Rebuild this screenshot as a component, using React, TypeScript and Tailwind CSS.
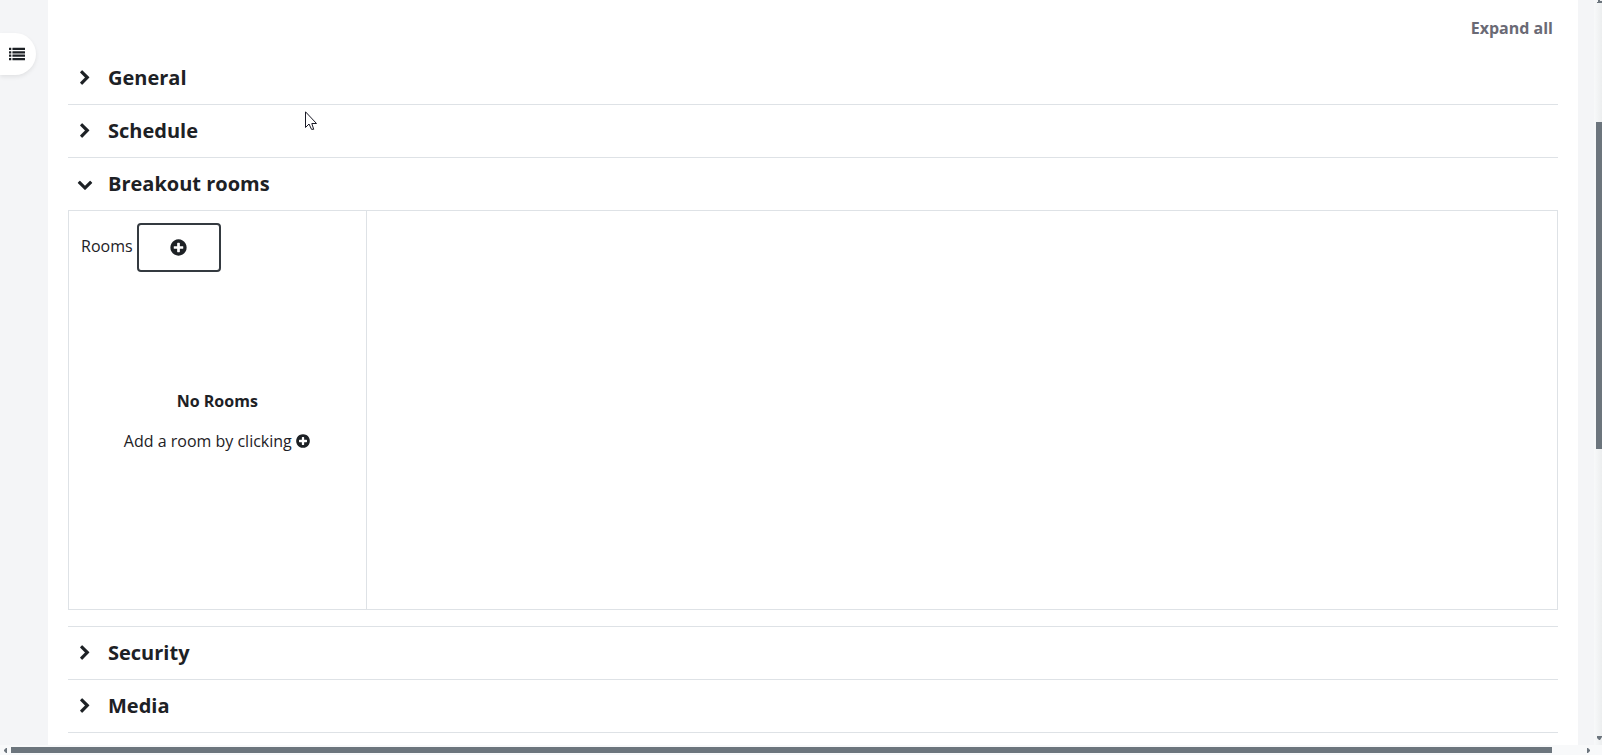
import { useState } from "react"

type IconProps = { className?: string }

function ChevronRight({ className }: IconProps) {
  return (
    <svg viewBox="0 0 1792 1792" fill="currentColor" className={className} aria-hidden="true">
      <path d="M1363 877l-742 742q-19 19-45 19t-45-19l-166-166q-19-19-19-45t19-45l531-531-531-531q-19-19-19-45t19-45l166-166q19-19 45-19t45 19l742 742q19 19 19 45t-19 45z" />
    </svg>
  )
}

function ChevronDown({ className }: IconProps) {
  return (
    <svg viewBox="0 0 1792 1792" fill="currentColor" className={className} aria-hidden="true">
      <path d="M1683 808l-742 741q-19 19-45 19t-45-19l-742-741q-19-19-19-45.5t19-45.5l166-165q19-19 45-19t45 19l531 531 531-531q19-19 45-19t45 19l166 165q19 19 19 45.5t-19 45.5z" />
    </svg>
  )
}

function PlusCircle({ className }: IconProps) {
  return (
    <svg viewBox="0 0 1792 1792" fill="currentColor" className={className} aria-hidden="true">
      <path d="M1344 960v-128q0-26-19-45t-45-19h-256v-256q0-26-19-45t-45-19h-128q-26 0-45 19t-19 45v256h-256q-26 0-45 19t-19 45v128q0 26 19 45t45 19h256v256q0 26 19 45t45 19h128q26 0 45-19t19-45v-256h256q26 0 45-19t19-45zm320-64q0 209-103 385.5t-279.5 279.5-385.5 103-385.5-103-279.5-279.5-103-385.5 103-385.5 279.5-279.5 385.5-103 385.5 103 279.5 279.5 103 385.5z" />
    </svg>
  )
}

function ListIcon({ className }: IconProps) {
  return (
    <svg viewBox="0 0 1792 1792" fill="currentColor" className={className} aria-hidden="true">
      {[192, 576, 960, 1344].map((y) => (
        <g key={y}>
          <rect x="0" y={y} width="256" height="256" rx="32" />
          <rect x="384" y={y} width="1408" height="256" rx="32" />
        </g>
      ))}
    </svg>
  )
}

function Section({
  title,
  open,
  onToggle,
  children,
}: {
  title: string
  open: boolean
  onToggle: () => void
  children?: React.ReactNode
}) {
  const Chevron = open ? ChevronDown : ChevronRight
  return (
    <section className="border-b border-[#dee2e6]">
      <h3>
        <button
          type="button"
          aria-expanded={open}
          onClick={onToggle}
          className="flex h-[52px] w-full items-center gap-[15px] pl-[9px] text-left text-xl font-bold"
        >
          <Chevron className="size-4 shrink-0" />
          {title}
        </button>
      </h3>
      {open && children}
    </section>
  )
}

function BreakoutRooms() {
  return (
    <div className="mb-4 flex h-[400px] border border-[#dee2e6]">
      <div className="flex w-1/5 flex-col border-r border-[#dee2e6]">
        <div className="flex items-center gap-1 pt-3 pl-3">
          <span id="rooms-label" className="pb-1">
            Rooms
          </span>
          <button
            type="button"
            aria-label="Add room"
            className="flex h-[49px] w-[84px] items-center justify-center rounded border-2 border-[#343a40]"
          >
            <PlusCircle className="size-[19px]" />
          </button>
        </div>
        <div className="flex flex-1 flex-col items-center justify-center gap-4 pb-10">
          <strong className="font-bold">No Rooms</strong>
          <p className="flex items-center gap-[3px]">
            Add a room by clicking
            <PlusCircle className="size-4" />
          </p>
        </div>
      </div>
      <div className="flex-1" />
    </div>
  )
}

const sections = ["General", "Schedule", "Breakout rooms", "Security", "Media"]

export default function App() {
  const [opened, setOpened] = useState<string[]>(["Breakout rooms"])

  const toggle = (title: string) =>
    setOpened((prev) => (prev.includes(title) ? prev.filter((t) => t !== title) : [...prev, title]))

  return (
    <div className="relative flex h-screen flex-col overflow-hidden bg-[#f4f5f7] font-['Open_Sans','Noto_Sans',sans-serif] text-base text-[#1d2125]">
      <div className="flex min-h-0 flex-1">
        <aside className="w-12 shrink-0 pt-[33px]">
          <button
            type="button"
            aria-label="Open course index"
            className="flex h-[42px] w-9 items-center rounded-r-full bg-white pl-[9px] shadow-[0_2px_4px_rgba(0,0,0,0.08)]"
          >
            <ListIcon className="size-4" />
          </button>
        </aside>

        <main className="min-w-0 flex-1 overflow-hidden bg-white px-5">
          <div className="flex h-[52px] items-center justify-end pt-1 pr-[5px]">
            <button type="button" onClick={() => setOpened(sections)} className="font-bold text-[#6a6a75]">
              Expand all
            </button>
          </div>
          {sections.map((title) => (
            <Section key={title} title={title} open={opened.includes(title)} onToggle={() => toggle(title)}>
              {title === "Breakout rooms" && <BreakoutRooms />}
            </Section>
          ))}
        </main>

        {/* vertical scrollbar */}
        <div className="flex w-6 shrink-0 justify-end">
          <div className="flex w-2 flex-col items-end bg-gradient-to-r from-[#f8f9fa] to-[#eceeef]">
            <svg viewBox="0 0 6 3" fill="#6c757d" className="h-[3px] w-[6px]">
              <path d="M2 0h2v1h2v2H1V2h1z" />
            </svg>
            <div className="mt-[119px] h-[327px] w-[6px] bg-[#6c757d]" />
            <svg viewBox="0 0 6 4" fill="#6c757d" className="mt-auto mb-[5px] h-1 w-[6px]">
              <path d="M1 0h5v1L4 4H3L1 2z" />
            </svg>
          </div>
        </div>
      </div>

      {/* horizontal scrollbar */}
      <div className="flex h-[10px] shrink-0 items-center bg-[#f8f9fa]">
        <svg viewBox="0 0 11 10" fill="#6c757d" className="h-[10px] w-[11px]">
          <path d="M7 3v5H6L4 6V5l2-2z" />
        </svg>
        <div className="h-[6px] flex-1 bg-[#6c757d]" />
        <svg viewBox="0 0 50 10" fill="#6c757d" className="h-[10px] w-[50px]">
          <path d="M35 3v5h1l2-2V5l-2-2z" />
        </svg>
      </div>

      <svg
        viewBox="0 0 12 19"
        className="pointer-events-none absolute top-[111px] left-[305px] h-[19px] w-3"
        aria-hidden="true"
      >
        <path
          d="M.5 .8V16.500L4 13l2.500 5.300h2.200L6.800 12.500h4.700z"
          fill="#fff"
          stroke="#1a1a26"
          strokeWidth="1"
        />
      </svg>
    </div>
  )
}
